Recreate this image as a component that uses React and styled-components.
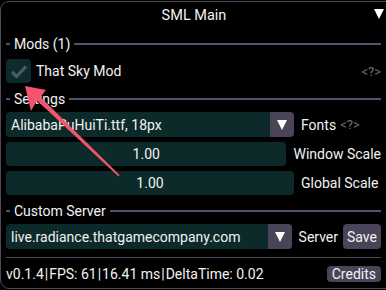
import React from 'react';
import styled, { createGlobalStyle } from 'styled-components';

const GlobalStyle = createGlobalStyle`
  html, body {
    margin: 0;
    padding: 0;
    background: #000;
    overflow: hidden;
  }
  body {
    font-family: Roboto, "Noto Sans", sans-serif;
    font-size: 14px;
    color: #f2f2f2;
  }
`

const Page = styled.div`
  position: relative;
  width: 386px;
  height: 290px;
  overflow: hidden;
  background: #000;
`

const Window = styled.div`
  position: absolute;
  left: 0;
  top: 1px;
  width: 400px;
  height: 288px;
  box-sizing: border-box;
  border: 1px solid #4d4b5a;
  border-radius: 9px;
  background: #000;
  display: flex;
  flex-direction: column;
`

const TitleBar = styled.div`
  position: relative;
  height: 28px;
  width: 386px;
  display: flex;
  align-items: center;
  justify-content: center;
  line-height: 1;
  font-size: 14.5px;
`

const Collapse = styled.div`
  position: absolute;
  right: 3px;
  top: 7px;
  width: 0;
  height: 0;
  border-left: 5px solid transparent;
  border-right: 5px solid transparent;
  border-top: 10px solid #fff;
`

const Content = styled.div`
  width: 386px;
  box-sizing: border-box;
  padding: 0 6px 0 5px;
  display: flex;
  flex-direction: column;
`

const Header = styled.div`
  display: flex;
  align-items: center;
  height: 16px;
  margin-top: ${p => p.$top}px;
  gap: 4px;
  line-height: 1;
  &::before {
    content: '';
    width: 4px;
    height: 2px;
    background: #55536a;
  }
  &::after {
    content: '';
    flex: 1;
    height: 2px;
    background: #55536a;
  }
`

const Row = styled.div`
  display: flex;
  align-items: center;
  height: ${p => p.$h || 24}px;
  margin-top: ${p => p.$top}px;
`

const CheckBox = styled.div`
  width: 25px;
  height: 24px;
  border-radius: 4px;
  background: #0b2c2b;
  display: flex;
  align-items: center;
  justify-content: center;
`

const ModName = styled.span`
  margin-left: 5px;
  flex: 1;
`

const Hint = styled.span`
  color: #6f6f7c;
  font-size: 13px;
  margin-left: ${p => p.$left || 0}px;
`

const Field = styled.div`
  width: 288px;
  height: 100%;
  border-radius: 4px;
  background: #0b2a29;
  display: flex;
  align-items: center;
  overflow: hidden;
`

const FieldText = styled.span`
  flex: 1;
  padding-left: 5px;
  white-space: nowrap;
`

const SliderText = styled.span`
  flex: 1;
  text-align: center;
`

const ArrowButton = styled.div`
  width: 24px;
  height: 100%;
  background: #4a4458;
  display: flex;
  align-items: center;
  justify-content: center;
  &::after {
    content: '';
    width: 0;
    height: 0;
    border-left: 5px solid transparent;
    border-right: 5px solid transparent;
    border-top: 10px solid #fff;
  }
`

const Label = styled.span`
  margin-left: 7px;
  white-space: nowrap;
`

const Button = styled.div`
  background: #4a4458;
  border-radius: 4px;
  display: flex;
  align-items: center;
  justify-content: center;
  height: ${p => p.$h}px;
  padding: 0 ${p => p.$pad || 4}px;
  margin-left: ${p => p.$left || 0}px;
`

const Separator = styled.div`
  height: 1px;
  background: #4d4b5a;
  margin-top: 8px;
`

const Footer = styled.div`
  display: flex;
  align-items: center;
  justify-content: space-between;
  height: 18px;
  margin-top: 7px;
  white-space: nowrap;
`

const Pipe = styled.span`
  margin: 0 1px;
`

const Overlay = styled.svg`
  position: absolute;
  left: 0;
  top: 0;
  pointer-events: none;
`

export default function App() {
  return (
    <Page>
      <GlobalStyle />
      <Window>
        <TitleBar>
          SML Main
          <Collapse />
        </TitleBar>
        <Content>
          <Header $top={6}>Mods (1)</Header>
          <Row $top={7}>
            <CheckBox>
              <svg width="18" height="15" viewBox="0 0 18 15">
                <path d="M2 8 L6.5 12.5 L16 2.5" fill="none" stroke="#4f5a68" strokeWidth="3.2" />
              </svg>
            </CheckBox>
            <ModName>That Sky Mod</ModName>
            <Hint>&lt;?&gt;</Hint>
          </Row>
          <Header $top={8}>Settings</Header>
          <Row $top={5} $h={25}>
            <Field>
              <FieldText>AlibabaPuHuiTi.ttf, 18px</FieldText>
              <ArrowButton />
            </Field>
            <Label>Fonts</Label>
            <Hint $left={4}>&lt;?&gt;</Hint>
          </Row>
          <Row $top={5}>
            <Field>
              <SliderText>1.00</SliderText>
            </Field>
            <Label>Window Scale</Label>
          </Row>
          <Row $top={5}>
            <Field>
              <SliderText>1.00</SliderText>
            </Field>
            <Label>Global Scale</Label>
          </Row>
          <Header $top={8}>Custom Server</Header>
          <Row $top={5} $h={25}>
            <Field>
              <FieldText>live.radiance.thatgamecompany.com</FieldText>
              <ArrowButton />
            </Field>
            <Label>Server</Label>
            <Button $h={25} $left={5}>Save</Button>
          </Row>
          <Separator />
          <Footer>
            <span>
              v0.1.4<Pipe>|</Pipe>FPS: 61<Pipe>|</Pipe>16.41 ms<Pipe>|</Pipe>DeltaTime: 0.02
            </span>
            <Button $h={16} $pad={5}>Credits</Button>
          </Footer>
        </Content>
      </Window>
      <Overlay width="386" height="290" viewBox="0 0 386 290">
        <polygon
          points="25,86 46,90 40.5,97 119.5,175 118.5,176.5 37,100.5 31,111"
          fill="#f2556c"
        />
      </Overlay>
    </Page>
  );
}
